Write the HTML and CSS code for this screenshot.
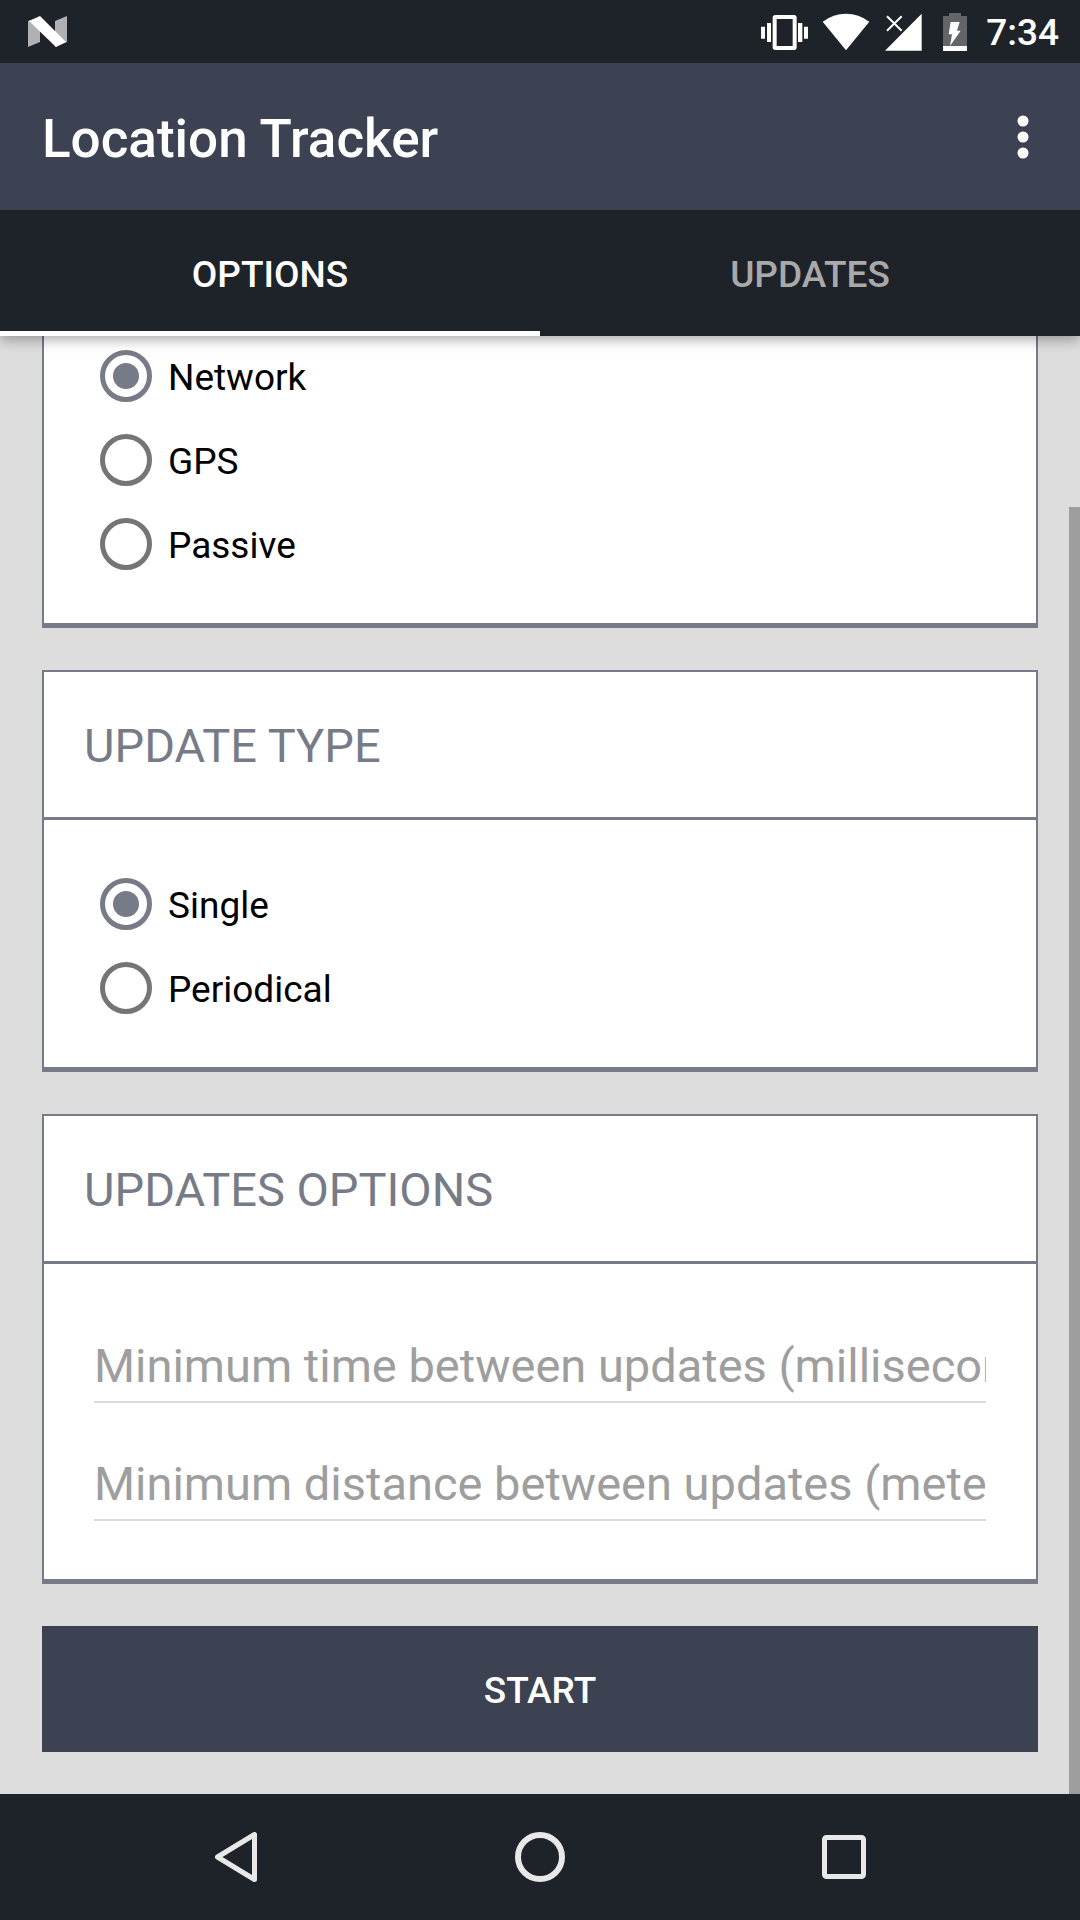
FILE: index.html
```html
<!DOCTYPE html>
<html lang="en">
<head>
<meta charset="utf-8">
<meta name="viewport" content="width=device-width, initial-scale=1">
<title>Location Tracker</title>
<link rel="stylesheet" href="styles.css">
</head>
<body>
<div class="app">
  <header class="header">
    <div class="status-bar">
      <svg class="status-logo" width="39" height="32" viewBox="28 16 39 32" aria-hidden="true">
        <path fill="#b0b1b4" d="M28 21l12-4v25l-12 5zM55 21l12-5v26l-12 5z"/>
        <path fill="#fff" d="M29 21l11-5 26 26-10 5z"/>
      </svg>
      <div class="status-icons">
        <svg width="47" height="38" viewBox="63 36 141 114" fill="#fff" aria-hidden="true">
          <path fill-rule="evenodd" d="M106 42h56a8 8 0 0 1 8 8v89a8 8 0 0 1-8 8h-56a8 8 0 0 1-8-8V50a8 8 0 0 1 8-8zM110 54v81h48V54z"/>
          <path d="M81 66h12v57H81zM63 77h12v36H63zM174 66h13v57h-13zM192 77h12v36h-12z"/>
        </svg>
        <svg width="48" height="38" viewBox="246 36 144 114" fill="#fff" aria-hidden="true">
          <path d="M248 62Q280 38 318 38T388 62L318 148z"/>
        </svg>
        <svg width="38" height="38" viewBox="432 36 114 114" aria-hidden="true">
          <path fill="#fff" d="M435 149L545 38V149z"/>
          <path fill="none" stroke="#fff" stroke-width="6" d="M441 46l44 43M485 46l-44 43"/>
        </svg>
        <svg width="38" height="38" viewBox="588 36 114 114" aria-hidden="true">
          <path fill="#626569" d="M627 36h36v9h18v105h-72V45h18z"/>
          <path fill="#fff" d="M609 135h72v15h-72zM632 63h27l-8 26h11l-32 46 6-35h-10z"/>
        </svg>
        <time class="clock">7:34</time>
      </div>
    </div>
    <div class="toolbar">
      <h1 class="toolbar-title">Location Tracker</h1>
      <button class="menu-button" type="button" aria-label="More options">
        <svg width="12" height="44" viewBox="0 0 12 44" fill="#fff" aria-hidden="true">
          <circle cx="6" cy="6" r="5.5"/><circle cx="6" cy="22" r="5.5"/><circle cx="6" cy="38" r="5.5"/>
        </svg>
      </button>
    </div>
    <nav class="tabs">
      <a class="tab tab-active" href="#options" aria-current="page">OPTIONS</a>
      <a class="tab" href="#updates">UPDATES</a>
    </nav>
  </header>

  <main class="content" id="options">
    <section class="card card-clipped">
      <div class="card-body" role="radiogroup" aria-label="Provider">
        <label class="choice"><input class="radio" type="radio" name="provider" checked><span class="choice-text">Network</span></label>
        <label class="choice"><input class="radio" type="radio" name="provider"><span class="choice-text">GPS</span></label>
        <label class="choice"><input class="radio" type="radio" name="provider"><span class="choice-text">Passive</span></label>
      </div>
    </section>

    <section class="card">
      <h2 class="card-title" id="type-title">UPDATE TYPE</h2>
      <div class="card-body" role="radiogroup" aria-labelledby="type-title">
        <label class="choice"><input class="radio" type="radio" name="type" checked><span class="choice-text">Single</span></label>
        <label class="choice"><input class="radio" type="radio" name="type"><span class="choice-text">Periodical</span></label>
      </div>
    </section>

    <section class="card">
      <h2 class="card-title">UPDATES OPTIONS</h2>
      <div class="card-body">
        <div class="field"><input class="field-input" type="text" inputmode="numeric" aria-label="Minimum time between updates (milliseconds)" placeholder="Minimum time between updates (milliseconds)"></div>
        <div class="field"><input class="field-input" type="text" inputmode="numeric" aria-label="Minimum distance between updates (meters)" placeholder="Minimum distance between updates (meters)"></div>
      </div>
    </section>

    <button class="start-button" type="button">START</button>
    <div class="scroll-thumb"></div>
  </main>

  <footer class="nav-bar">
    <button class="nav-button" type="button" aria-label="Back">
      <svg width="50" height="50" viewBox="0 0 50 50" fill="none" stroke="#e8e8e8" stroke-width="5" stroke-linejoin="round" aria-hidden="true"><path d="M43.500 2.500v45L6.500 25z"/></svg>
    </button>
    <button class="nav-button" type="button" aria-label="Home">
      <svg width="50" height="50" viewBox="0 0 50 50" fill="none" stroke="#e8e8e8" stroke-width="6" aria-hidden="true"><circle cx="25" cy="25" r="22"/></svg>
    </button>
    <button class="nav-button" type="button" aria-label="Recent apps">
      <svg width="50" height="50" viewBox="0 0 50 50" fill="none" stroke="#e8e8e8" stroke-width="5" aria-hidden="true"><rect x="5.500" y="5.500" width="39" height="39" rx="2"/></svg>
    </button>
  </footer>
</div>
</body>
</html>
```
FILE: styles.css
```css
:root {
  --dark: #1e2229;
  --primary: #3c4251;
  --accent: #777b87;
  --page: #dddddd;
}

* {
  box-sizing: border-box;
}

body {
  margin: 0;
  background: var(--page);
  color: #000;
  font-family: Roboto, "Noto Sans", sans-serif;
  font-size: 37px;
}

button {
  margin: 0;
  padding: 0;
  border: 0;
  background: none;
  color: inherit;
  font: inherit;
}

svg {
  display: block;
}

.app {
  display: flex;
  flex-direction: column;
  min-height: 100vh;
}

.header {
  position: relative;
  z-index: 1;
  background: var(--dark);
  color: #fff;
  box-shadow: 0 4px 12px rgba(0, 0, 0, 0.32);
}

.status-bar {
  display: flex;
  align-items: center;
  justify-content: space-between;
  height: 63px;
  padding: 0 21px 0 28px;
}

.status-icons {
  display: flex;
  align-items: center;
  gap: 14px;
}

.clock {
  margin-left: -2px;
  padding-top: 2px;
  font-weight: 500;
  line-height: 44px;
}

.toolbar {
  display: flex;
  align-items: center;
  justify-content: space-between;
  height: 147px;
  padding: 0 42px;
  background: var(--primary);
}

.toolbar-title {
  margin: 0;
  padding-top: 4px;
  font-size: 53px;
  font-weight: 500;
  line-height: 60px;
}

.menu-button {
  display: flex;
  justify-content: center;
  width: 30px;
}

.tabs {
  display: flex;
  height: 126px;
}

.tab {
  display: flex;
  flex: 1;
  align-items: center;
  justify-content: center;
  padding-top: 2px;
  border: solid transparent;
  border-width: 5px 0;
  color: #a9a9a9;
  font-weight: 500;
  text-decoration: none;
}

.tab-active {
  border-bottom-color: #fff;
  color: #fff;
}

.content {
  position: relative;
  display: flex;
  flex: 1;
  flex-direction: column;
  gap: 42px;
  padding: 0 42px 42px;
}

.card {
  border: 2px solid var(--accent);
  border-bottom-width: 5px;
  background: #fff;
}

/* Scrolled partly under the header */
.card-clipped {
  margin-top: -44px;
}

.card-title {
  margin: 0;
  padding: 46px 40px 44px;
  border-bottom: 3px solid var(--accent);
  color: var(--accent);
  font-size: 47px;
  font-weight: 400;
  line-height: 55px;
}

.card-body {
  padding: 42px 42px 37px;
}

.card-clipped .card-body {
  padding-top: 40px;
}

.choice {
  display: flex;
  align-items: center;
  gap: 16px;
  height: 84px;
  padding: 0 14px;
}

.choice-text {
  padding-top: 2px;
}

.radio {
  display: grid;
  flex: none;
  place-content: center;
  width: 52px;
  height: 52px;
  margin: 0;
  border: 5px solid #757575;
  border-radius: 50%;
  appearance: none;
}

.radio:checked {
  border-color: var(--accent);
}

.radio:checked::before {
  content: "";
  width: 26px;
  height: 26px;
  border-radius: 50%;
  background: var(--accent);
}

.field {
  padding: 0 8px 21px;
}

.field-input {
  display: block;
  width: 100%;
  height: 97px;
  padding: 32px 0 8px;
  border: 0;
  border-bottom: 2px solid #dbdbdb;
  border-radius: 0;
  background: none;
  color: #000;
  font: inherit;
  font-size: 47px;
  line-height: 55px;
}

.field-input::placeholder {
  color: #9e9e9e;
  opacity: 1;
}

.start-button {
  height: 126px;
  padding-top: 2px;
  background: var(--primary);
  color: #fff;
  font-weight: 500;
}

.scroll-thumb {
  position: absolute;
  top: 171px;
  right: 0;
  bottom: 0;
  width: 11px;
  background: #9e9e9e;
}

.nav-bar {
  display: flex;
  height: 126px;
  padding: 0 84px;
  background: var(--dark);
}

.nav-button {
  display: flex;
  flex: 1;
  align-items: center;
  justify-content: center;
}
```
